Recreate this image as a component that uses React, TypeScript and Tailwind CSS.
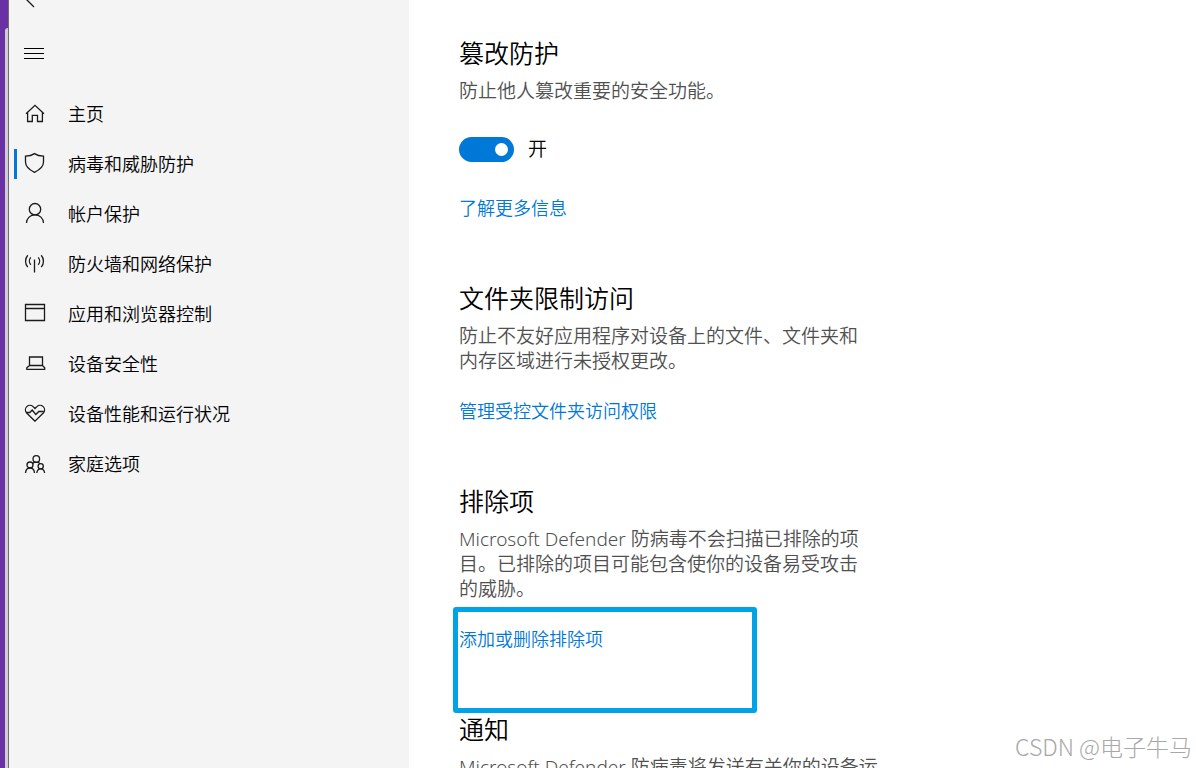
import type { ReactNode } from "react";

function Icon({ children }: { children: ReactNode }) {
  return (
    <svg
      viewBox="0 0 24 24"
      className="size-6 shrink-0"
      fill="none"
      stroke="#1a1a1a"
      strokeWidth="1.3"
      aria-hidden="true"
    >
      {children}
    </svg>
  );
}

const navItems: { label: string; active?: boolean; icon: ReactNode }[] = [
  {
    label: "主页",
    icon: <path d="M3 11.8 12 3.3l9 8.5M4.6 10.5v9h4.7v-6.2h5.2v6.2h4.9v-9" />,
  },
  {
    label: "病毒和威胁防护",
    active: true,
    icon: (
      <path d="M11.5 1.6C9.2 3.2 6 4 2.5 4.1v6c0 4.6 3.8 7.8 9 10.2 5.2-2.4 9-5.6 9-10.2v-6c-3.5-.1-6.7-.9-9-2.5Z" />
    ),
  },
  {
    label: "帐户保护",
    icon: (
      <>
        <circle cx="12" cy="7.2" r="5.7" />
        <path d="M3.5 21c.2-4.8 3.8-8.1 8.5-8.1s8.3 3.3 8.5 8.1" />
      </>
    ),
  },
  {
    label: "防火墙和网络保护",
    icon: (
      <path d="M11.5 7.5v13M4.8 3.2c-3 3.3-3 8.6 0 11.9M7.8 5.4c-1.9 2.1-1.9 5.3 0 7.4M18.2 3.2c3 3.3 3 8.6 0 11.9M15.2 5.4c1.9 2.1 1.9 5.3 0 7.4" />
    ),
  },
  {
    label: "应用和浏览器控制",
    icon: <path d="M2.5 2.5h19v16h-19zM2.5 6.5h19" />,
  },
  {
    label: "设备安全性",
    icon: (
      <path d="M6.5 13.5v-8.5h13v8.5M6.5 13.5h13l2.2 2.3v1.5h-17.9v-1.5z" />
    ),
  },
  {
    label: "设备性能和运行状况",
    icon: (
      <>
        <path d="M12 19.2 3.7 11C2 9.2 2 6.4 3.8 4.6c1.8-1.7 4.6-1.7 6.3 0L12 6.5l1.9-1.9c1.7-1.7 4.5-1.7 6.3 0 1.8 1.8 1.8 4.6.1 6.4Z" />
        <path d="M3.5 10.5h3.3l2.4-2.5 3.6 4.5 3-3h4.9" />
      </>
    ),
  },
  {
    label: "家庭选项",
    icon: (
      <>
        <circle cx="13.3" cy="7" r="3.3" />
        <circle cx="7" cy="13" r="3" />
        <circle cx="17.7" cy="14.3" r="2.6" />
        <path d="M2.5 21c.2-2.8 2-5 4.5-5s4.3 2.2 4.5 5M13.8 21c.2-2.4 1.7-4.1 3.9-4.1s3.7 1.7 3.9 4.1M9.5 12c.6-1.2 2-1.8 3.8-1.8 1.7 0 3.2.7 3.9 1.7" />
      </>
    ),
  },
];

function Section({
  title,
  children,
}: {
  title: string;
  children: ReactNode;
}) {
  return (
    <section>
      <h2 className="mb-2 text-[25px] leading-[35px] text-black">{title}</h2>
      {children}
    </section>
  );
}

function Description({ children }: { children: ReactNode }) {
  return <p className="text-[19px] leading-[25px] text-[#505050]">{children}</p>;
}

function SettingLink({ children }: { children: ReactNode }) {
  return (
    <a href="#" className="block w-fit text-[18px] leading-[25px] text-[#0078d7]">
      {children}
    </a>
  );
}

export default function App() {
  return (
    <div className="relative flex h-screen overflow-hidden bg-white font-['Noto_Sans','Noto_Sans_CJK_SC',sans-serif] font-[350]">
      <div className="flex w-[9px] shrink-0 border-r border-[#6e6e6e] bg-[#6a31a5]">
        <div className="ml-[5px] mt-7 flex-1 rounded-tl bg-[#cfcdd1]" />
      </div>

      <aside className="w-[400px] shrink-0 bg-[#f4f4f4]">
        <button type="button" aria-label="返回" className="ml-4 block h-2 overflow-hidden">
          <svg viewBox="0 0 20 8" className="block h-2 w-5" fill="none" stroke="#1a1a1a" strokeWidth="1.3">
            <path d="M1-1 9 7" />
          </svg>
        </button>
        <button type="button" aria-label="菜单" className="ml-[15px] mt-[33px] block">
          <svg viewBox="0 0 20 24" className="block h-6 w-5" stroke="#000" strokeWidth="1">
            <path d="M0 7.5h20M0 12.5h20M0 17.5h20" />
          </svg>
        </button>
        <nav className="mt-6">
          {navItems.map((item) => (
            <a
              key={item.label}
              href="#"
              aria-current={item.active ? "page" : undefined}
              className="flex h-[50px] items-center pl-[5px] text-[18px] leading-[25px] text-black"
            >
              <span className={item.active ? "h-[30px] w-[3px] bg-[#0078d7]" : "h-[30px] w-[3px]"} />
              <span className="ml-[6px]">
                <Icon>{item.icon}</Icon>
              </span>
              <span className="ml-[21px]">{item.label}</span>
            </a>
          ))}
        </nav>
      </aside>

      <main className="min-w-0 flex-1 pl-[50px] pt-9">
        <div className="flex max-w-[417px] flex-col gap-[60px]">
          <Section title="篡改防护">
            <Description>防止他人篡改重要的安全功能。</Description>
            <label className="mb-[34px] mt-[33px] flex h-[25px] w-fit items-center gap-[14px] text-[19px] leading-[25px] text-black">
              <input
                type="checkbox"
                role="switch"
                defaultChecked
                className="h-[25px] w-[55px] appearance-none rounded-full bg-[#8a8a8a] before:ml-[6px] before:mt-[6px] before:block before:size-[13px] before:rounded-full before:bg-white checked:bg-[#0078d7] checked:before:ml-9"
              />
              开
            </label>
            <SettingLink>了解更多信息</SettingLink>
          </Section>

          <Section title="文件夹限制访问">
            <Description>
              防止不友好应用程序对设备上的文件、文件夹和内存区域进行未授权更改。
            </Description>
            <div className="mt-[25px]">
              <SettingLink>管理受控文件夹访问权限</SettingLink>
            </div>
          </Section>

          <Section title="排除项">
            <Description>
              Microsoft Defender 防病毒不会扫描已排除的项目。已排除的项目可能包含使你的设备易受攻击的威胁。
            </Description>
            <div className="relative mt-[25px]">
              <SettingLink>添加或删除排除项</SettingLink>
              <div className="pointer-events-none absolute -left-[6px] -top-5 h-[106px] w-[304px] rounded-[3px] border-[5px] border-[#00a2e8]" />
            </div>
          </Section>

          <Section title="通知">
            <div className="whitespace-nowrap">
              <Description>Microsoft Defender 防病毒将发送有关你的设备运</Description>
            </div>
          </Section>
        </div>
      </main>

      <div className="absolute bottom-1 right-1 font-['Noto_Sans_CJK_SC',sans-serif] text-[23px] font-light leading-9 text-[#a8a8a8]">
        CSDN @电子牛马
      </div>
    </div>
  );
}
